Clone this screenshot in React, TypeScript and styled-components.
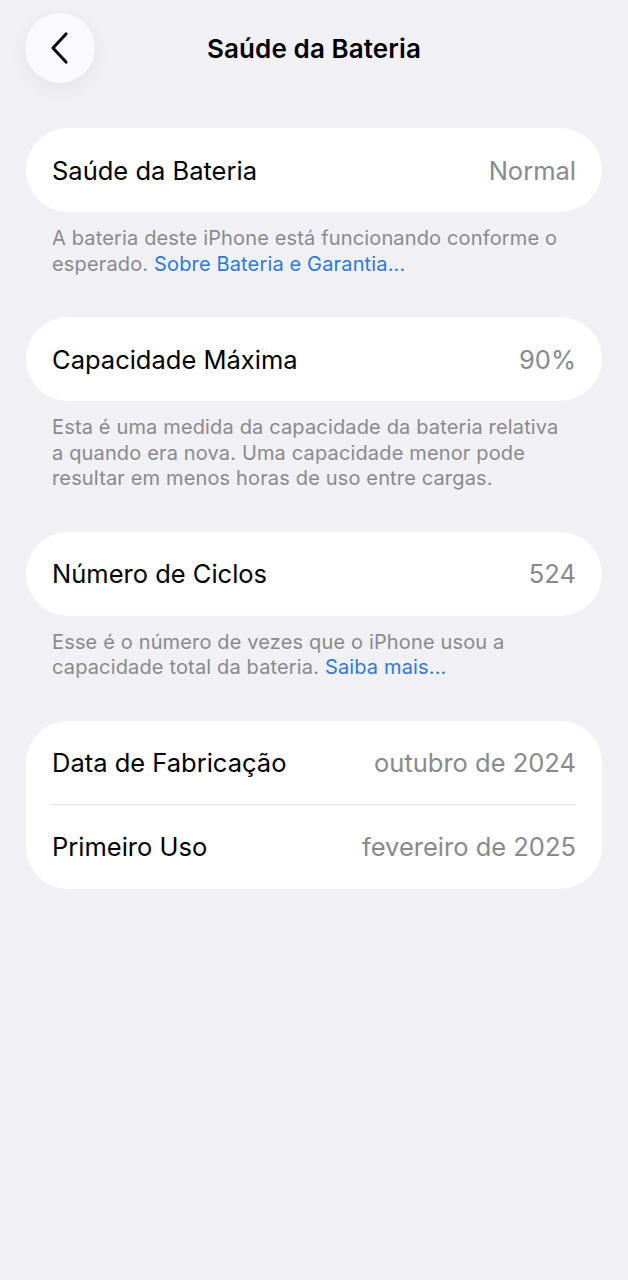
import styled, { createGlobalStyle } from "styled-components";

const GlobalStyle = createGlobalStyle`
    html, body {
        margin: 0;
        padding: 0;
        background: #f0f0f5;
        font-family: Inter, "Noto Sans", "Liberation Sans", sans-serif;
        -webkit-font-smoothing: antialiased;
    }
`

const Page = styled.div`
    min-height: 1280px;
    background: #f0f0f5;
    padding: 13px 26px 0;
    box-sizing: border-box;
`

const Header = styled.header`
    position: relative;
    height: 70px;
    display: flex;
    align-items: center;
    justify-content: center;
    margin-bottom: 45px;
`

const BackButton = styled.button`
    position: absolute;
    left: -1px;
    top: 0;
    width: 70px;
    height: 70px;
    border-radius: 50%;
    border: none;
    background: #fafafc;
    box-shadow: 0 6px 18px rgba(0, 0, 0, 0.06);
    display: flex;
    align-items: center;
    justify-content: center;
    padding: 0 3px 0 0;
`

const Title = styled.h1`
    margin: 0;
    font-size: 26px;
    font-weight: 600;
    color: #000;
    letter-spacing: 0.1px;
`

const Section = styled.section`
    margin-bottom: 40px;
`

const Card = styled.div`
    background: #fff;
    border-radius: 42px;
    padding: 0 26px;
`

const Row = styled.div<{ $divider?: boolean }>`
    height: 84px;
    display: flex;
    align-items: center;
    justify-content: space-between;
    border-bottom: ${({ $divider }) => ($divider ? "1.5px solid #e3e3e8" : "none")};
    box-sizing: border-box;
    font-size: 25.5px;
`

const Label = styled.span`
    color: #000;
`

const Value = styled.span`
    color: #8a8a8e;
`

const Footer = styled.p`
    margin: 14px 40px 0 26px;
    font-size: 20px;
    line-height: 25.5px;
    color: #8a8a8e;
    letter-spacing: 0.15px;
`

const Link = styled.a`
    color: #2f7ad6;
    text-decoration: none;
`

const Chevron = () => (
    <svg width="22" height="34" viewBox="0 0 22 34" fill="none">
        <path d="M18 3L5 17L18 31" stroke="#111" strokeWidth="3.2" strokeLinecap="round" strokeLinejoin="round" />
    </svg>
)

const App = () => {
    return <Page>
        <GlobalStyle />
        <Header>
            <BackButton aria-label="Voltar"><Chevron /></BackButton>
            <Title>Saúde da Bateria</Title>
        </Header>

        <Section>
            <Card>
                <Row><Label>Saúde da Bateria</Label><Value>Normal</Value></Row>
            </Card>
            <Footer>
                A bateria deste iPhone está funcionando conforme o esperado. <Link>Sobre Bateria e Garantia...</Link>
            </Footer>
        </Section>

        <Section>
            <Card>
                <Row><Label>Capacidade Máxima</Label><Value>90%</Value></Row>
            </Card>
            <Footer>
                Esta é uma medida da capacidade da bateria relativa a quando era nova. Uma capacidade menor pode resultar em menos horas de uso entre cargas.
            </Footer>
        </Section>

        <Section>
            <Card>
                <Row><Label>Número de Ciclos</Label><Value>524</Value></Row>
            </Card>
            <Footer>
                Esse é o número de vezes que o iPhone usou a capacidade total da bateria. <Link>Saiba mais...</Link>
            </Footer>
        </Section>

        <Section>
            <Card>
                <Row $divider><Label>Data de Fabricação</Label><Value>outubro de 2024</Value></Row>
                <Row><Label>Primeiro Uso</Label><Value>fevereiro de 2025</Value></Row>
            </Card>
        </Section>
    </Page>
}

export default App;
